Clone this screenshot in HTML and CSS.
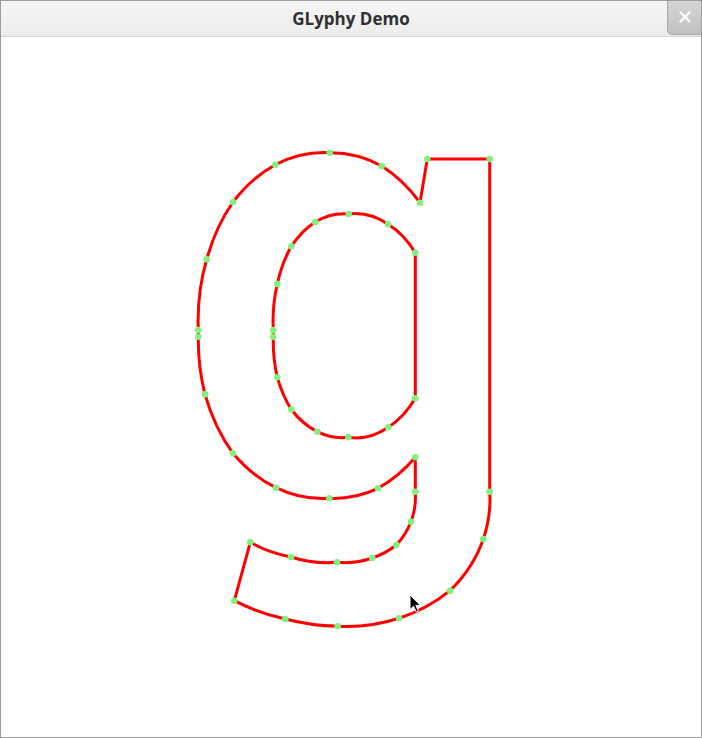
FILE: index.html
```html
<!DOCTYPE html>
<html>
<head>
<meta charset="utf-8">
<title>GLyphy Demo</title>
<link rel="stylesheet" href="styles.css">
</head>
<body>
<div class="window">
  <div class="titlebar">
    <span class="title">GLyphy Demo</span>
    <button class="close" aria-label="Close">
      <svg width="12" height="12" viewBox="0 0 12 12"><path d="M1.5 1.5 L10.5 10.5 M10.5 1.5 L1.5 10.5" stroke="#fff" stroke-width="2.2" stroke-linecap="round"/></svg>
    </button>
  </div>
  <div class="canvas">
    <svg class="glyph" width="700" height="700" viewBox="1 37 700 700">
      <g fill="none" stroke="#ff0000" stroke-width="3" stroke-linejoin="round">
        <path d="M427.3 159 L489.7 159 L489.7 491.7
          A152 135 0 0 1 483.3 539
          A152 135 0 0 1 450 590.7
          A152 135 0 0 1 399 618.3
          A152 135 0 0 1 337.7 626.3
          A180 140 0 0 1 285.3 619
          A180 140 0 0 1 234.3 600.7
          L250.3 542.3
          A110 75 0 0 0 291 557
          A95 75 0 0 0 337 562.3
          A80 75 0 0 0 372.3 558
          A80 75 0 0 0 396.3 545
          A80 75 0 0 0 411 521.7
          A80 75 0 0 0 415.3 491.7
          L415.3 457.3
          A132 173 0 0 1 378 488.3
          A132 173 0 0 1 329.3 498.3
          A132 173 0 0 1 276 487.7
          A132 173 0 0 1 233 453.3
          A132 173 0 0 1 205 394.3
          A132 173 0 0 1 198.3 336.7
          L198.3 330
          A132 173 0 0 1 206.7 259.3
          A132 173 0 0 1 233 202
          A132 173 0 0 1 275.3 164.7
          A132 173 0 0 1 329.7 152.7
          A132 173 0 0 1 381.7 166
          A132 173 0 0 1 420 202.7 Z"/>
        <path d="M415.3 252.7 L415.3 398.3
          A76 112 0 0 1 388.3 427.3
          A76 112 0 0 1 348.3 437.3
          A76 112 0 0 1 317.3 431.7
          A76 112 0 0 1 291.3 409.5
          A76 112 0 0 1 277.3 377.3
          A76 112 0 0 1 273.3 336.7
          L273.3 330
          A76 112 0 0 1 277.3 284
          A76 112 0 0 1 291.3 246.3
          A76 112 0 0 1 315.3 222
          A76 112 0 0 1 348.7 214
          A76 112 0 0 1 388 224.3
          A76 112 0 0 1 415.3 252.7 Z"/>
      </g>
      <g fill="#82f07c">
        <circle cx="427.3" cy="159" r="3.3"/>
        <circle cx="489.7" cy="159" r="3.3"/>
        <circle cx="489.7" cy="491.7" r="3.3"/>
        <circle cx="483.3" cy="539" r="3.3"/>
        <circle cx="450" cy="590.7" r="3.3"/>
        <circle cx="399" cy="618.3" r="3.3"/>
        <circle cx="337.7" cy="626.3" r="3.3"/>
        <circle cx="285.3" cy="619" r="3.3"/>
        <circle cx="234.3" cy="600.7" r="3.3"/>
        <circle cx="250.3" cy="542.3" r="3.3"/>
        <circle cx="291" cy="557" r="3.3"/>
        <circle cx="337" cy="562.3" r="3.3"/>
        <circle cx="372.3" cy="558" r="3.3"/>
        <circle cx="396.3" cy="545" r="3.3"/>
        <circle cx="411" cy="521.7" r="3.3"/>
        <circle cx="415.3" cy="491.7" r="3.3"/>
        <circle cx="415.3" cy="457.3" r="3.3"/>
        <circle cx="378" cy="488.3" r="3.3"/>
        <circle cx="329.3" cy="498.3" r="3.3"/>
        <circle cx="276" cy="487.7" r="3.3"/>
        <circle cx="233" cy="453.3" r="3.3"/>
        <circle cx="205" cy="394.3" r="3.3"/>
        <circle cx="198.3" cy="336.7" r="3.3"/>
        <circle cx="198.3" cy="330" r="3.3"/>
        <circle cx="206.7" cy="259.3" r="3.3"/>
        <circle cx="233" cy="202" r="3.3"/>
        <circle cx="275.3" cy="164.7" r="3.3"/>
        <circle cx="329.7" cy="152.7" r="3.3"/>
        <circle cx="381.7" cy="166" r="3.3"/>
        <circle cx="420" cy="202.7" r="3.3"/>
        <circle cx="415.3" cy="252.7" r="3.3"/>
        <circle cx="415.3" cy="398.3" r="3.3"/>
        <circle cx="388.3" cy="427.3" r="3.3"/>
        <circle cx="348.3" cy="437.3" r="3.3"/>
        <circle cx="317.3" cy="431.7" r="3.3"/>
        <circle cx="291.3" cy="409.5" r="3.3"/>
        <circle cx="277.3" cy="377.3" r="3.3"/>
        <circle cx="273.3" cy="336.7" r="3.3"/>
        <circle cx="273.3" cy="330" r="3.3"/>
        <circle cx="277.3" cy="284" r="3.3"/>
        <circle cx="291.3" cy="246.3" r="3.3"/>
        <circle cx="315.3" cy="222" r="3.3"/>
        <circle cx="348.7" cy="214" r="3.3"/>
        <circle cx="388" cy="224.3" r="3.3"/>
      </g>
    </svg>
    <svg class="cursor" width="14" height="20" viewBox="0 0 14 20">
      <path d="M1 1 L1 15.5 L4.6 12.2 L7.2 18 L9.4 17 L6.9 11.4 L11.6 11.4 Z" fill="#000" stroke="#fff" stroke-width="1" stroke-linejoin="round"/>
    </svg>
  </div>
</div>
</body>
</html>
```
FILE: styles.css
```css
html, body {
  margin: 0;
  padding: 0;
  background: #ffffff;
}
.window {
  width: 702px;
  height: 738px;
  box-sizing: border-box;
  border: 1px solid #9c9c9c;
  display: flex;
  flex-direction: column;
  background: #ffffff;
  overflow: hidden;
}
.titlebar {
  height: 36px;
  flex: 0 0 36px;
  box-sizing: border-box;
  border-bottom: 1px solid #d4d4d4;
  background: linear-gradient(#f6f6f6, #ececec);
  display: flex;
  align-items: center;
  justify-content: center;
  position: relative;
}
.title {
  font-family: "Open Sans", "DejaVu Sans", sans-serif;
  font-weight: 700;
  font-size: 17px;
  color: #303030;
  letter-spacing: 0;
  margin-top: -1px;
}
.close {
  position: absolute;
  top: -1px;
  right: -1px;
  width: 35px;
  height: 35px;
  box-sizing: border-box;
  border: 1px solid #a8a8a8;
  border-top: none;
  border-bottom-left-radius: 5px;
  background: linear-gradient(#d6d6d6, #c0c0c0);
  padding: 0;
  display: flex;
  align-items: center;
  justify-content: center;
}
.canvas {
  flex: 1;
  position: relative;
}
.glyph {
  display: block;
}
.cursor {
  position: absolute;
  left: 408px;
  top: 557px;
}
```
